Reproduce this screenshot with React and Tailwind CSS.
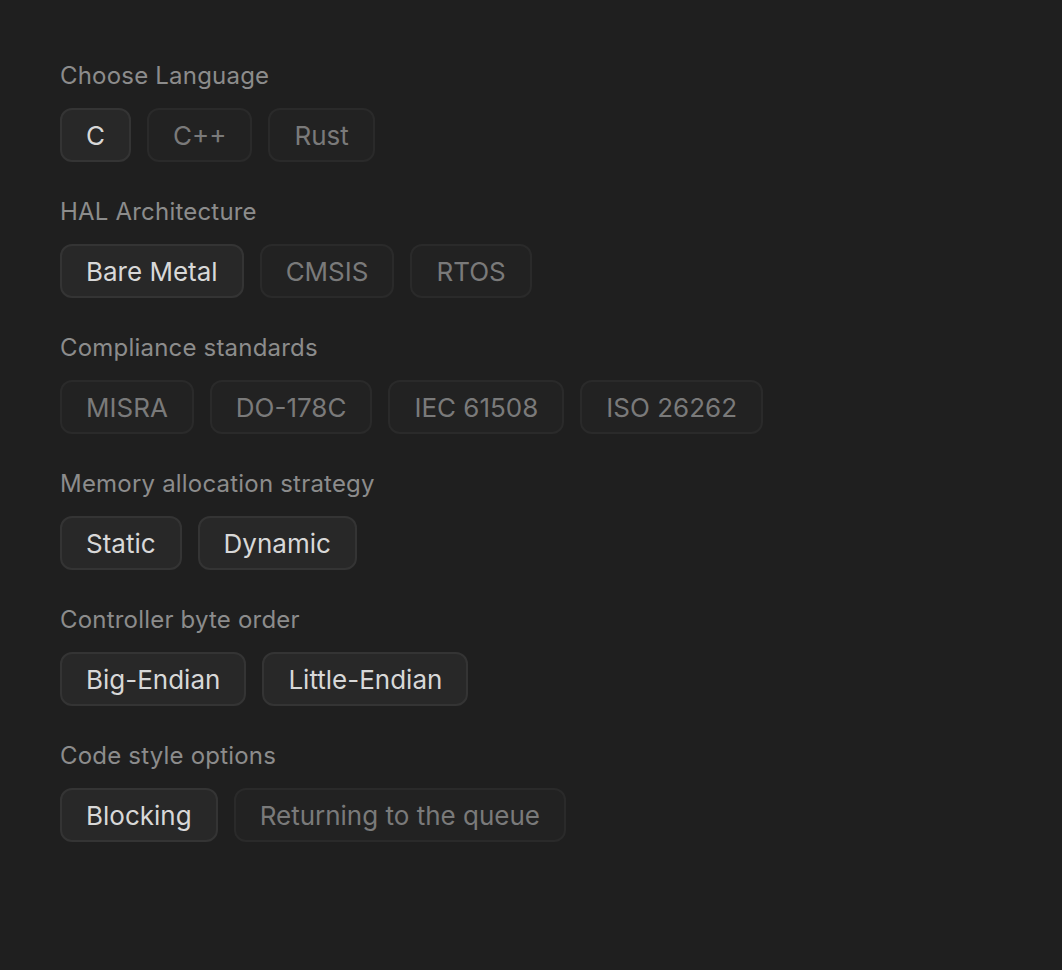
import React, { useState } from 'react';

const GROUPS = [
  { label: 'Choose Language', options: ['C', 'C++', 'Rust'], selected: ['C'] },
  { label: 'HAL Architecture', options: ['Bare Metal', 'CMSIS', 'RTOS'], selected: ['Bare Metal'] },
  { label: 'Compliance standards', options: ['MISRA', 'DO-178C', 'IEC 61508', 'ISO 26262'], selected: [] },
  { label: 'Memory allocation strategy', options: ['Static', 'Dynamic'], selected: ['Static', 'Dynamic'] },
  { label: 'Controller byte order', options: ['Big-Endian', 'Little-Endian'], selected: ['Big-Endian', 'Little-Endian'] },
  { label: 'Code style options', options: ['Blocking', 'Returning to the queue'], selected: ['Blocking'] },
];

function OptionGroup({ label, options, selected }) {
  const [active, setActive] = useState(selected);

  const toggle = (opt) => {
    setActive((prev) => (prev.includes(opt) ? prev.filter((o) => o !== opt) : [...prev, opt]));
  };

  return (
    <div className="flex flex-col">
      <div className="text-[24px] leading-[32px] tracking-[0.2px] text-[#8c8c8c]">{label}</div>
      <div className="mt-[16px] flex gap-[16px]">
        {options.map((opt) => {
          const on = active.includes(opt);
          return (
            <button
              key={opt}
              onClick={() => toggle(opt)}
              className={
                on
                  ? 'h-[54px] px-[24px] rounded-[12px] border-2 border-[#343434] bg-[#282828] text-[26px] text-[#d8d8d8]'
                  : 'h-[54px] px-[24px] rounded-[12px] border-2 border-[#2a2a2a] bg-[#222222] text-[26px] text-[#7a7a7a]'
              }
            >
              {opt}
            </button>
          );
        })}
      </div>
    </div>
  );
}

export default function App() {
  return (
    <div className="min-h-[970px] bg-[#1f1f1f] px-[60px] pt-[60px] font-['Inter',sans-serif]">
      <div className="flex flex-col gap-[34px]">
        {GROUPS.map((g) => (
          <OptionGroup key={g.label} {...g} />
        ))}
      </div>
    </div>
  );
}
